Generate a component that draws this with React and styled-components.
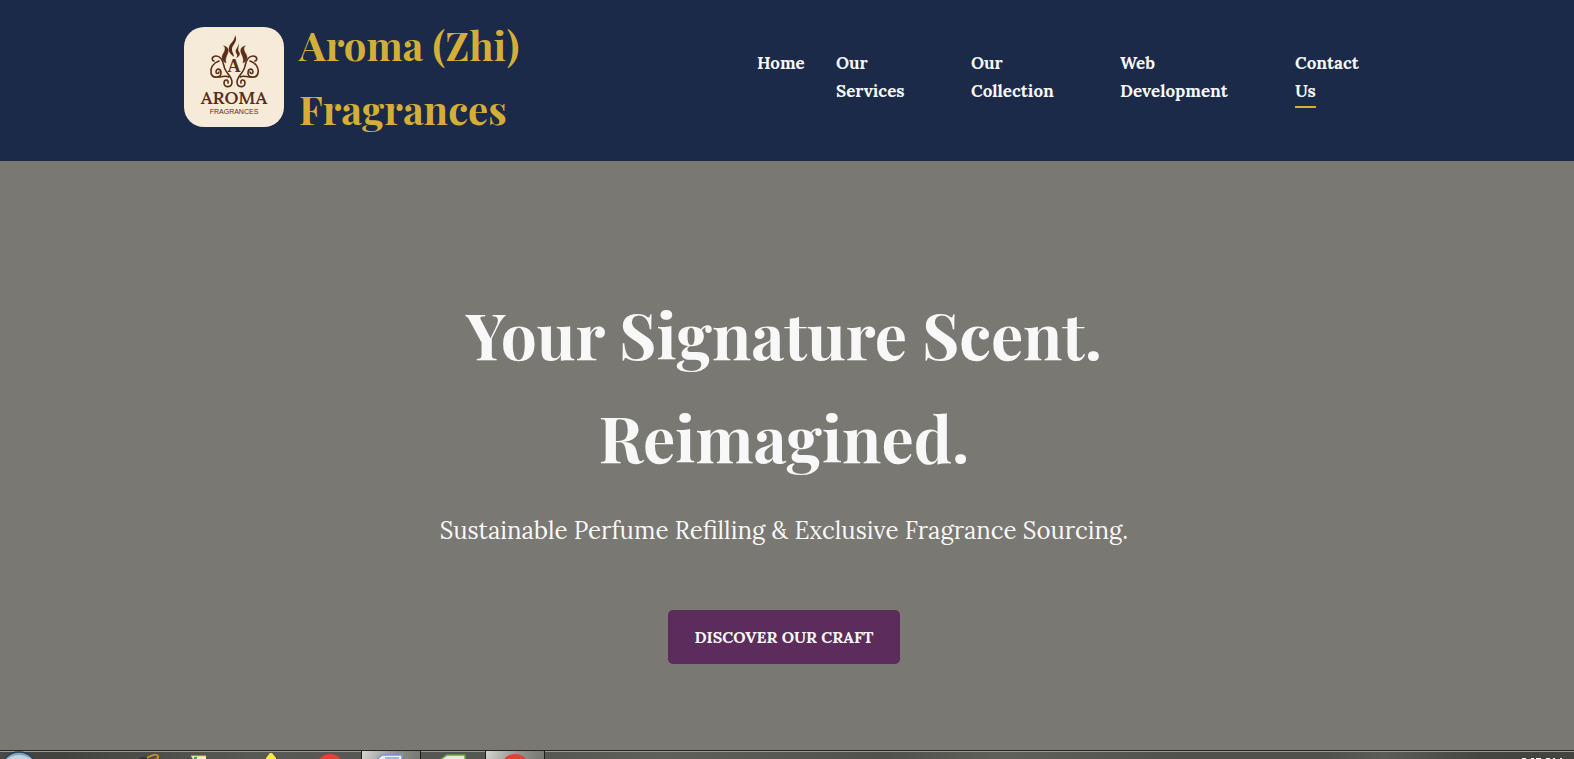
import React from "react";
import styled, { createGlobalStyle } from "styled-components";

const serif = `"Playfair Display", "Liberation Serif", serif`;
const body = `"Lora", "Liberation Serif", serif`;

const GlobalStyle = createGlobalStyle`
  *, *::before, *::after { box-sizing: border-box; }
  body { margin: 0; background: #7a7872; color: #f8f8f8; font-family: ${body}; }
`;

const Page = styled.div`
  min-height: 100vh;
  display: flex;
  flex-direction: column;
`;

const Header = styled.header`
  background: #1b2a49;
  padding: 13px 6px 20px 0;
`;

const HeaderInner = styled.div`
  max-width: 1200px;
  margin: 0 auto;
  display: flex;
  align-items: center;
  justify-content: space-between;
`;

const Brand = styled.a`
  display: flex;
  align-items: center;
  gap: 15px;
  color: #d4af37;
  text-decoration: none;
`;

const Logo = styled.svg`
  flex: none;
  width: 100px;
  height: 100px;
`;

const BrandName = styled.span`
  max-width: 260px;
  font: 700 40px/64px ${serif};
`;

const NavList = styled.ul`
  display: grid;
  grid-template-columns: 49px 105px 119px 145px 89px;
  gap: 30px;
  margin: 0;
  padding: 0;
  list-style: none;
`;

const NavLink = styled.a`
  color: #f8f8f8;
  font: 700 17px/28px ${body};
  text-decoration: none;
`;

const LastWord = styled.span`
  padding-bottom: 4px;
  border-bottom: 2px solid ${(p) => (p.$active ? "#d4af37" : "transparent")};
`;

const Hero = styled.main`
  flex: 1;
  display: flex;
  flex-direction: column;
  align-items: center;
  justify-content: center;
  padding: 35px 26px 0 20px;
  text-align: center;
`;

const HeroTitle = styled.h1`
  max-width: 800px;
  margin: 0 0 23px;
  font: 700 64px/103px ${serif};
`;

const HeroText = styled.p`
  margin: 0 0 59px;
  font: 400 24px/40px ${body};
`;

const CraftButton = styled.button`
  height: 54px;
  padding: 0 27px;
  border: 0;
  border-radius: 5px;
  background: #5c2d5c;
  color: #f8f8f8;
  font: 700 16px/26px ${body};
  text-transform: uppercase;
  cursor: pointer;
`;

const Taskbar = styled.footer`
  display: flex;
  height: 9px;
  overflow: hidden;
  border-top: 1px solid #23231f;
  box-shadow: inset 0 1px #9b9b95;
  background: linear-gradient(90deg, #494945 0, #41413e 3%, #585854 16%, #555551 34%, #60605b 42%, #50504c 56%, #60605b 64%, #50504c 75%, #50504c 84%, #5b5b57 88%, #454541 94%, #434340);
`;

const Slot = styled.div`
  flex: none;
  display: flex;
  justify-content: center;
  width: ${(p) => p.$w}px;
  margin-right: ${(p) => p.$gap || 0}px;
  border: solid #1d1d1b;
  border-width: ${(p) => (p.$open ? "0 1px" : "0")};
  background: ${(p) => (p.$open ? "linear-gradient(120deg, #d5d5d1, #92928d 55%, #777772)" : "transparent")};

  svg { flex: none; width: 40px; height: 8px; }
`;

const Tray = styled.svg`
  flex: none;
  width: 44px;
  height: 8px;
  margin: 0 10px 0 auto;
`;

const links = [
  ["Home"],
  ["Our", "Services"],
  ["Our", "Collection"],
  ["Web", "Development"],
  ["Contact", "Us"],
];

const HalfEmblem = () => (
  <g>
    <path d="M40 19C45 20 45 24 43 28C42 30 41 33 42 36C38 34 37 31 39 27C41 24 42 21 40 19Z" fill="#5a2d16" strokeWidth=".5" />
    <path d="M30 34C27 33 28 29 32 29C37 29 39 34 40 39C41 46 48 49 48 55C48 61 40 61 40 56C40 52 45 52 44 56" />
    <path d="M35 34C29 36 26 41 27 46C28 52 37 51 37 46C37 41 32 41 32 45C32 47 35 47 35 45" />
    <path d="M34 50C39 50 41 48 45 50" />
  </g>
);

function AromaLogo() {
  return (
    <Logo viewBox="0 0 100 100" role="img" aria-label="Aroma Fragrances">
      <rect width="100" height="100" rx="20" fill="#f6ebd8" />
      <g fill="none" stroke="#5a2d16" strokeWidth="1.6" strokeLinecap="round">
        <HalfEmblem />
        <g transform="translate(101 0) scale(-1 1)"><HalfEmblem /></g>
      </g>
      <path d="M51 8C55 15 47 18 48 23C48 25 50 27 50 30C46 27 44 24 45 20C46 16 51 14 51 8ZM54 15C56 20 50 22 52 26C54 28 53 30 52 31C55 30 57 27 55 25C53 22 56 19 54 15Z" fill="#5a2d16" />
      <text x="50" y="45" textAnchor="middle" fontFamily="Liberation Serif, serif" fontWeight="700" fontSize="18" fill="#5a2d16">A</text>
      <text x="50" y="77" textAnchor="middle" fontFamily="Lora, Liberation Serif, serif" fontWeight="600" fontSize="18" fill="#5a2d16">AROMA</text>
      <text x="50" y="87" textAnchor="middle" fontFamily="Liberation Sans, sans-serif" fontSize="7" fill="#5a2d16">FRAGRANCES</text>
    </Logo>
  );
}

const RedDisc = () => (
  <svg viewBox="0 0 40 8" aria-hidden="true"><circle cx="20" cy="17" r="14" fill="#e8402f" /></svg>
);

export default function App() {
  return (
    <Page>
      <GlobalStyle />
      <Header>
        <HeaderInner>
          <Brand href="#home">
            <AromaLogo />
            <BrandName>Aroma (Zhi) Fragrances</BrandName>
          </Brand>
          <nav aria-label="Main">
            <NavList>
              {links.map(([first, second]) => (
                <li key={first + second}>
                  <NavLink href="#">
                    {first}
                    {second && <><br /><LastWord $active={first === "Contact"}>{second}</LastWord></>}
                  </NavLink>
                </li>
              ))}
            </NavList>
          </nav>
        </HeaderInner>
      </Header>
      <Hero>
        <HeroTitle>Your Signature Scent.<br />Reimagined.</HeroTitle>
        <HeroText>Sustainable Perfume Refilling &amp; Exclusive Fragrance Sourcing.</HeroText>
        <CraftButton type="button">Discover Our Craft</CraftButton>
      </Hero>
      <Taskbar>
        <Slot $w={38} $gap={92}>
          <svg viewBox="0 0 40 8" aria-hidden="true"><circle cx="20" cy="19" r="18" fill="#86a5bb" stroke="#1f415c" strokeWidth="1.5" /><path d="M8 8 Q20 0 32 8Z" fill="#c2d3de" /></svg>
        </Slot>
        <Slot $w={40} $gap={10}>
          <svg viewBox="0 0 40 8" aria-hidden="true"><path d="M8 8l3-2h9l-2 2z" fill="#34373c" /><path d="M17 7Q24 3 27 4Q30 6 26 8" fill="none" stroke="#d99a20" strokeWidth="1.5" /></svg>
        </Slot>
        <Slot $w={40} $gap={30}>
          <svg viewBox="0 0 40 8" aria-hidden="true"><path d="M11 5h15v3H13z" fill="#f6f0c8" /><path d="M11 5h15" stroke="#e2c45a" /><path d="M14 6h3v2h-3z" fill="#35a853" /></svg>
        </Slot>
        <Slot $w={40} $gap={20}>
          <svg viewBox="0 0 40 8" aria-hidden="true"><path d="M16 8v-1l4-5h2l4 5v1z" fill="#ffeb3b" /></svg>
        </Slot>
        <Slot $w={40} $gap={11}><RedDisc /></Slot>
        <Slot $w={60} $open>
          <svg viewBox="0 0 40 8" aria-hidden="true"><path d="M6 8l5-4h20v4" fill="#e9eff8" stroke="#7893cc" strokeWidth="1.5" /><path d="M14 6h14v2H14z" fill="#9fb3dc" /></svg>
        </Slot>
        <Slot $w={64}>
          <svg viewBox="0 0 40 8" aria-hidden="true"><path d="M8 8l6-4h18v4" fill="#e5e9df" stroke="#63a63a" strokeWidth="1.5" /></svg>
        </Slot>
        <Slot $w={60} $open><RedDisc /></Slot>
        <Tray viewBox="0 0 44 8" aria-hidden="true">
          <path d="M2 7h4v1h-4zM11 7h3v1h-3zM16 7h5v1h-5zM26 7h4v1h-4zM33 7h2v1h-2zM40 7h2v1h-2z" fill="#fff" />
        </Tray>
      </Taskbar>
    </Page>
  );
}
